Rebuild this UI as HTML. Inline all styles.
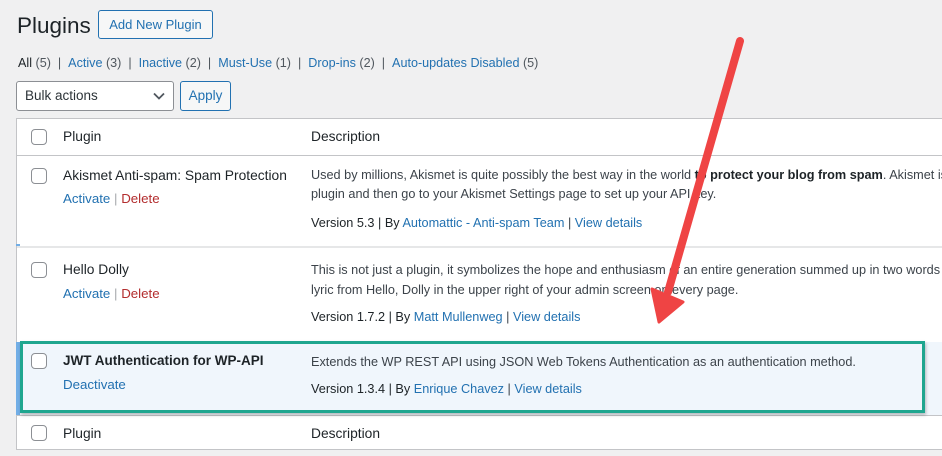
<!DOCTYPE html>
<html><head><meta charset="utf-8"><style>
*{margin:0;padding:0;box-sizing:border-box}
body{width:942px;height:456px;overflow:hidden;background:#f0f0f1;font-family:"Liberation Sans",sans-serif;color:#3c434a;font-size:12.7px;position:relative}
.a{position:absolute;white-space:nowrap}
.l{color:#2271b1}
.d{color:#b32d2e}
.cb{position:absolute;width:16px;height:16px;border:1px solid #8c8f94;border-radius:4px;background:#fff}
.t{color:#1d2327}
.n{font-size:13.8px}
</style></head><body>
<div class="a" style="left:17px;top:13px;font-size:22.5px;color:#1d2327">Plugins</div>
<div class="a" style="left:98px;top:10px;width:115px;height:29px;border:1px solid #2271b1;border-radius:3px;background:#f6f7f7;color:#2271b1;font-size:13px;line-height:27px;text-align:center">Add New Plugin</div>
<div class="a" style="left:18px;top:56px;font-size:12.6px;color:#50575e"><span style="color:#1d2327">All</span> (5) &nbsp;| &nbsp;<span class="l">Active</span> (3) &nbsp;| &nbsp;<span class="l">Inactive</span> (2) &nbsp;| &nbsp;<span class="l">Must-Use</span> (1) &nbsp;| &nbsp;<span class="l">Drop-ins</span> (2) &nbsp;| &nbsp;<span class="l">Auto-updates Disabled</span> (5)</div>
<div class="a" style="left:16px;top:81px;width:158px;height:30px;border:1px solid #8c8f94;border-radius:3px;background:#fff;color:#2c3338;font-size:13.5px;line-height:28px;padding-left:8px">Bulk actions<svg style="position:absolute;right:8px;top:10px" width="12" height="8" viewBox="0 0 12 8"><path d="M1 1.5l5 5 5-5" fill="none" stroke="#50575e" stroke-width="1.8"/></svg></div>
<div class="a" style="left:180px;top:81px;width:51px;height:30px;border:1px solid #2271b1;border-radius:3px;background:#f6f7f7;color:#2271b1;font-size:13.5px;line-height:28px;text-align:center">Apply</div>

<div class="a" style="left:16px;top:118px;width:940px;height:332px;background:#fff;border:1px solid #c3c4c7"></div>
<div class="a" style="left:17px;top:155px;width:930px;height:1px;background:#c3c4c7"></div>
<div class="a" style="left:17px;top:246px;width:930px;height:2px;background:#e6e7e8"></div>
<div class="a" style="left:16px;top:342px;width:930px;height:73px;background:#f0f6fc"></div>
<div class="a" style="left:16px;top:342px;width:4px;height:73px;background:#72aee6"></div>
<div class="a" style="left:16px;top:244px;width:4px;height:2px;background:#72aee6"></div>
<div class="a" style="left:17px;top:415px;width:930px;height:1px;background:#c3c4c7"></div>

<div class="cb" style="left:31px;top:129px"></div>
<div class="a t n" style="left:63px;top:129px">Plugin</div>
<div class="a t n" style="left:311px;top:129px">Description</div>

<div class="cb" style="left:31px;top:168px"></div>
<div class="a t n" style="left:63px;top:168px">Akismet Anti-spam: Spam Protection</div>
<div class="a" style="left:63px;top:191px;font-size:13.3px"><span class="l">Activate</span> <span style="color:#a7aaad">|</span> <span class="d">Delete</span></div>
<div class="a" style="left:311px;top:168px">Used by millions, Akismet is quite possibly the best way in the world <b style="color:#1d2327">to protect your blog from spam</b>. Akismet is</div>
<div class="a" style="left:311px;top:187px">plugin and then go to your Akismet Settings page to set up your API key.</div>
<div class="a" style="left:311px;top:216px"><span class="t">Version 5.3 | By</span> <span class="l">Automattic - Anti-spam Team</span> | <span class="l">View details</span></div>

<div class="cb" style="left:31px;top:262px"></div>
<div class="a t n" style="left:63px;top:262px">Hello Dolly</div>
<div class="a" style="left:63px;top:286px;font-size:13.3px"><span class="l">Activate</span> <span style="color:#a7aaad">|</span> <span class="d">Delete</span></div>
<div class="a" style="left:311px;top:263px">This is not just a plugin, it symbolizes the hope and enthusiasm of an entire generation summed up in two words</div>
<div class="a" style="left:311px;top:283px">lyric from Hello, Dolly in the upper right of your admin screen on every page.</div>
<div class="a" style="left:311px;top:310px"><span class="t">Version 1.7.2 | By</span> <span class="l">Matt Mullenweg</span> | <span class="l">View details</span></div>

<div class="cb" style="left:31px;top:353px"></div>
<div class="a t" style="left:63px;top:353px;font-size:13.5px;font-weight:bold">JWT Authentication for WP-API</div>
<div class="a" style="left:63px;top:377px;font-size:13.3px"><span class="l">Deactivate</span></div>
<div class="a" style="left:311px;top:355px">Extends the WP REST API using JSON Web Tokens Authentication as an authentication method.</div>
<div class="a" style="left:311px;top:382px"><span class="t">Version 1.3.4 | By</span> <span class="l">Enrique Chavez</span> | <span class="l">View details</span></div>

<div class="cb" style="left:31px;top:425px"></div>
<div class="a t n" style="left:63px;top:426px">Plugin</div>
<div class="a t n" style="left:311px;top:426px">Description</div>

<div class="a" style="left:20px;top:341px;width:905px;height:72px;border:3px solid #1fa68f;box-shadow:1px 2px 3px rgba(0,0,0,.25)"></div>

<svg class="a" style="left:0;top:0" width="942" height="456" viewBox="0 0 942 456">
<line x1="740" y1="41" x2="668" y2="292" stroke="#ef4444" stroke-width="8" stroke-linecap="round"/>
<path d="M652 289 L683 302 L659 322 Z" fill="#ef4444" stroke="#ef4444" stroke-width="3" stroke-linejoin="round"/>
</svg>
</body></html>
